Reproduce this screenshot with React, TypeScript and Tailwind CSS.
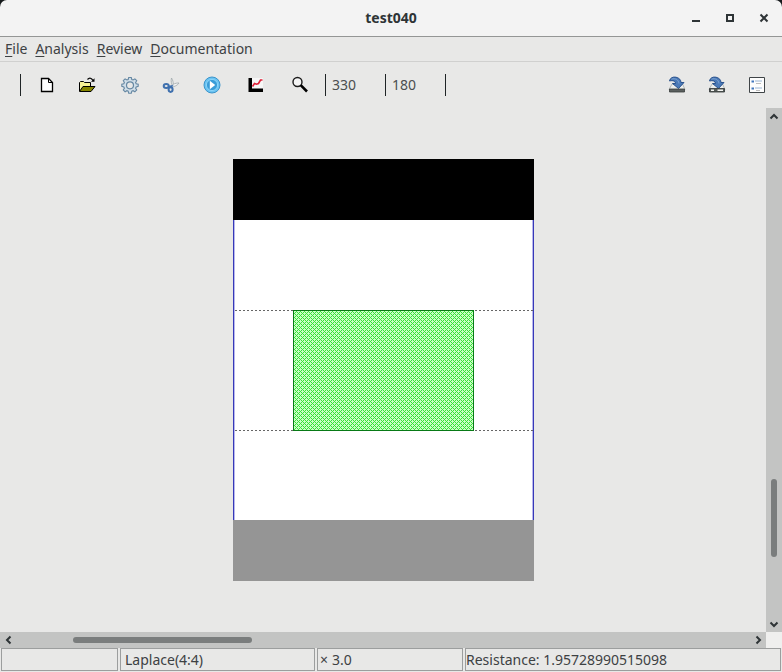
import { ReactNode } from 'react';

const menus = ['File', 'Analysis', 'Review', 'Documentation'];

function Separator() {
  return <div className="h-[22px] w-px shrink-0 bg-[#1f2426]" />;
}

function ToolButton({ label, children }: { label: string; children: ReactNode }) {
  return (
    <button type="button" aria-label={label} title={label} className="flex h-8 w-10 shrink-0 items-center justify-center">
      <svg viewBox="0 0 18 18" className="h-[18px] w-[18px]" fill="none">
        {children}
      </svg>
    </button>
  );
}

function Chevron({ d, label }: { d: string; label: string }) {
  return (
    <button type="button" aria-label={label} className="flex h-4 w-4 shrink-0 items-center justify-center">
      <svg viewBox="0 0 16 16" className="h-4 w-4" fill="none" stroke="#2e3436" strokeWidth="2">
        <path d={d} />
      </svg>
    </button>
  );
}

function SaveArrow() {
  return (
    <>
      <path d="M4 8h10.500l2.500 5.500H1z" fill="#eceeec" stroke="#a5aaab" strokeWidth=".8" />
      <path
        d="M1.500 5C1.800 2 5 .5 8 1.200c3.400.8 5 2.800 5 5.300h3L10.500 12.500 4.500 7.500h3C7.500 5.200 5 4 1.500 5z"
        fill="#4b7ab8"
        stroke="#204a87"
        strokeWidth=".9"
      />
      <path d="M3.500 3.200c3.500-1.300 7 .2 7.500 4.300" stroke="#86aad5" strokeWidth=".8" />
    </>
  );
}

function TitleBar() {
  return (
    <div className="bg-[#15191b]">
      <header className="grid h-[37px] grid-cols-[1fr_auto_1fr] items-center rounded-t-[7px] border-b border-[#949695] bg-[#f3f3f3]">
        <span />
        <h1 className="text-sm font-bold text-[#2e3436]">test040</h1>
        <div className="flex justify-end gap-2.5 pr-[6px]">
          <button type="button" aria-label="Minimize" className="flex h-6 w-6 items-center justify-center">
            <svg viewBox="0 0 12 12" className="h-3 w-3">
              <path d="M2 8h8v2H2z" fill="#2e3436" />
            </svg>
          </button>
          <button type="button" aria-label="Maximize" className="flex h-6 w-6 items-center justify-center">
            <svg viewBox="0 0 12 12" className="h-3 w-3">
              <path d="M3 3h6v6H3z" fill="none" stroke="#2e3436" strokeWidth="2" />
            </svg>
          </button>
          <button type="button" aria-label="Close" className="flex h-6 w-6 items-center justify-center">
            <svg viewBox="0 0 12 12" className="h-3 w-3">
              <path d="M2.500 2.500l7 7m0-7l-7 7" stroke="#2e3436" strokeWidth="2" />
            </svg>
          </button>
        </div>
      </header>
    </div>
  );
}

function Toolbar() {
  return (
    <div className="flex h-[46px] items-center pl-5 pr-[5px]">
      <Separator />
      <div className="flex pl-[6px]">
        <ToolButton label="New">
          <path d="M3.500 2.500h7l4 4v9h-11z" fill="#fff" stroke="#000" strokeWidth="1.300" />
          <path d="M10.500 2.500v4h4" stroke="#000" />
        </ToolButton>
        <ToolButton label="Open">
          <path d="M1.500 15V6.500l1-1h3l1 1h6V10" fill="#f7f296" stroke="#000" />
          <path d="M1.500 15.500L5 10.500h12l-4 5z" fill="#858500" stroke="#000" />
          <path d="M9.500 3.500c2-2.200 4-1.500 5.500 1" stroke="#000" strokeWidth="1.200" />
          <path d="M16.500 2.200v3.500H13z" fill="#000" />
        </ToolButton>
      </div>
      <div className="flex gap-[1px] pl-[3px]">
        <ToolButton label="Settings">
          <path
            d="M7.700 1.500h2.600l.5 2 1.300.5 1.800-1.100 1.800 1.800L14.600 6.500l.6 1.300 2 .5v2l-2 .6-.6 1.300 1.100 1.800-1.800 1.800-1.800-1.100-1.300.5-.5 2H7.700l-.5-2-1.300-.5-1.800 1.100L2.300 14l1.100-1.800-.6-1.300-2-.6v-2l2-.5.6-1.300L2.300 4.700l1.800-1.800L5.900 4l1.300-.5z"
            fill="#d0dee8"
            stroke="#6688a3"
            strokeWidth="1.100"
          />
          <circle cx="9" cy="9.300" r="3.500" fill="#e8e8e7" stroke="#6688a3" strokeWidth="1.200" />
        </ToolButton>
        <ToolButton label="Cut">
          <path d="M9.500 2c-.8 3 0 6 1.200 8l.8-1C11 6 11 4 9.500 2z" fill="#eceeee" stroke="#a0a8ac" strokeWidth=".8" />
          <path d="M17 7c-3-.2-6 1-8.500 3.200l1 1C12.500 10.500 15.500 9.500 17 7z" fill="#f4f4f4" stroke="#a0a8ac" strokeWidth=".8" />
          <ellipse cx="4.200" cy="10" rx="2.500" ry="1.900" stroke="#3f70ae" strokeWidth="2" />
          <ellipse cx="8.600" cy="13.600" rx="2" ry="2.300" stroke="#3f70ae" strokeWidth="2" />
          <path d="M6.500 10.500l3.500-.5-1.500 2" stroke="#3f70ae" strokeWidth="1.400" />
        </ToolButton>
        <ToolButton label="Run">
          <circle cx="9" cy="9" r="8" fill="#6cc4f2" stroke="#3b94cb" />
          <circle cx="9" cy="9" r="5.600" fill="#3a9dd8" stroke="#8bd4f8" />
          <path d="M6.800 4.800L12.200 9l-5.400 4.200z" fill="#fff" />
        </ToolButton>
      </div>
      <div className="flex gap-1 pl-[4px]">
        <ToolButton label="Plot">
          <path d="M4 2h12v12H4z" fill="#f7f7f7" />
          <path d="M1.500 2H5v10.500h11V16H1.500z" fill="#000" />
          <path d="M5.500 10.500l2-3 2 .7 2-.7 2-3.500h2" stroke="#df1f36" strokeWidth="1.600" />
        </ToolButton>
        <ToolButton label="Zoom">
          <circle cx="6.500" cy="6" r="4.500" fill="#f4f4f4" stroke="#1b1b1b" strokeWidth="1.400" />
          <path d="M9.700 9.200l6.300 6.300" stroke="#000" strokeWidth="2.600" />
        </ToolButton>
      </div>
      <div className="flex pl-[5px] leading-[22px] text-[#4b4e4f]">
        <Separator />
        <span className="w-[59px] pl-1.5">330</span>
        <Separator />
        <span className="w-[59px] pl-1.5">180</span>
        <Separator />
      </div>
      <div className="ml-auto flex">
        <ToolButton label="Save">
          <SaveArrow />
          <path d="M1.500 13h15v3h-15z" fill="#5b605f" stroke="#383d3e" strokeWidth=".8" />
        </ToolButton>
        <ToolButton label="Save as">
          <SaveArrow />
          <path d="M1.500 12.500h15V16h-15z" fill="#555b57" stroke="#2e3436" strokeWidth=".8" />
          <path d="M3 13.500h3v1.500H3zM9.500 13.500h5.500v1.500H9.500z" fill="#f3f4f2" />
        </ToolButton>
        <ToolButton label="Properties">
          <path d="M1.500 1.500h15v15h-15z" fill="#fdfdfd" stroke="#3f4447" />
          <path d="M3.500 4.500h2.500v2H3.500zM3.500 11.500h2.500v2H3.500z" fill="#4277bd" />
          <path d="M7 5h7M7 12h7" stroke="#9ab4d3" />
          <path d="M8 7.500h5M8 14.500h4" stroke="#bcbcbc" />
        </ToolButton>
      </div>
    </div>
  );
}

// Cross section of the conductor between the two electrodes
function Drawing() {
  return (
    <svg viewBox="0 0 302 422" className="h-[422px] w-[302px] shrink-0" shapeRendering="crispEdges">
      <defs>
        <pattern id="hatch" width="4" height="4" patternUnits="userSpaceOnUse">
          <rect width="4" height="4" fill="#c8ffc4" />
          <path d="M0 0h1v1H0zM2 2h1v1H2zM1 1h1v1H1zM3 3h1v1H3zM3 1h1v1H3zM1 3h1v1H1z" fill="#38e038" />
        </pattern>
      </defs>
      <rect x="1" y="61" width="301" height="300" fill="#fff" />
      <path d="M1.500 61v300M301.500 61v300" stroke="#3638b8" />
      <path d="M2.500 61v300M300.500 61v300" stroke="#b8b8ec" />
      <rect x="1" width="301" height="61" fill="#000" />
      <rect x="1" y="361" width="301" height="61" fill="#959595" />
      <path d="M3 151.500h58M243 151.500h58M3 271.500h58M243 271.500h58" stroke="#666" strokeDasharray="2 2" />
      <rect x="61.500" y="151.500" width="180" height="120" fill="url(#hatch)" stroke="#087a16" />
    </svg>
  );
}

export default function App() {
  return (
    <div className="flex min-h-screen flex-col bg-[#e8e8e7] font-['Noto_Sans',sans-serif] text-sm text-[#3d4143]">
      <TitleBar />
      <nav className="flex h-[25px] items-center gap-2 border-b border-[#d0d0cf] px-[5px]">
        {menus.map((menu) => (
          <button type="button" key={menu} className="leading-5">
            <span className="underline underline-offset-2">{menu[0]}</span>
            {menu.slice(1)}
          </button>
        ))}
      </nav>
      <Toolbar />

      <main className="grid grow grid-cols-[1fr_16px] grid-rows-[1fr_16px]">
        <div className="flex items-center justify-center">
          <Drawing />
        </div>
        <div className="flex flex-col items-center bg-[#c3c4c3]">
          <Chevron label="Scroll up" d="M4.500 10.500L8 7l3.500 3.500" />
          <div className="grow-[355]" />
          <div className="w-1.5 grow-[78] rounded-full bg-[#7a7d7d]" />
          <div className="grow-[59]" />
          <Chevron label="Scroll down" d="M4.500 6.500L8 10l3.500-3.500" />
        </div>
        <div className="flex items-center bg-[#c3c4c3]">
          <Chevron label="Scroll left" d="M10.500 4.500L7 8l3.500 3.500" />
          <div className="grow-[57]" />
          <div className="h-1.5 grow-[179] rounded-full bg-[#7a7d7d]" />
          <div className="grow-[498]" />
          <Chevron label="Scroll right" d="M6.500 4.500L10 8l-3.500 3.500" />
        </div>
        <div className="bg-[#efefee]" />
      </main>

      <footer className="grid h-6 grid-cols-[117fr_195fr_146fr_316fr] gap-0.5 px-px pb-px leading-[21px]">
        <div className="border border-[#9c9e9e]" />
        <div className="border border-[#9c9e9e] pl-1">Laplace(4:4)</div>
        <div className="flex gap-1 border border-[#9c9e9e] pl-[2px]">
          <span>×</span>
          <span>3.0</span>
        </div>
        <div className="border border-[#9c9e9e]">Resistance: 1.95728990515098</div>
      </footer>
    </div>
  );
}
